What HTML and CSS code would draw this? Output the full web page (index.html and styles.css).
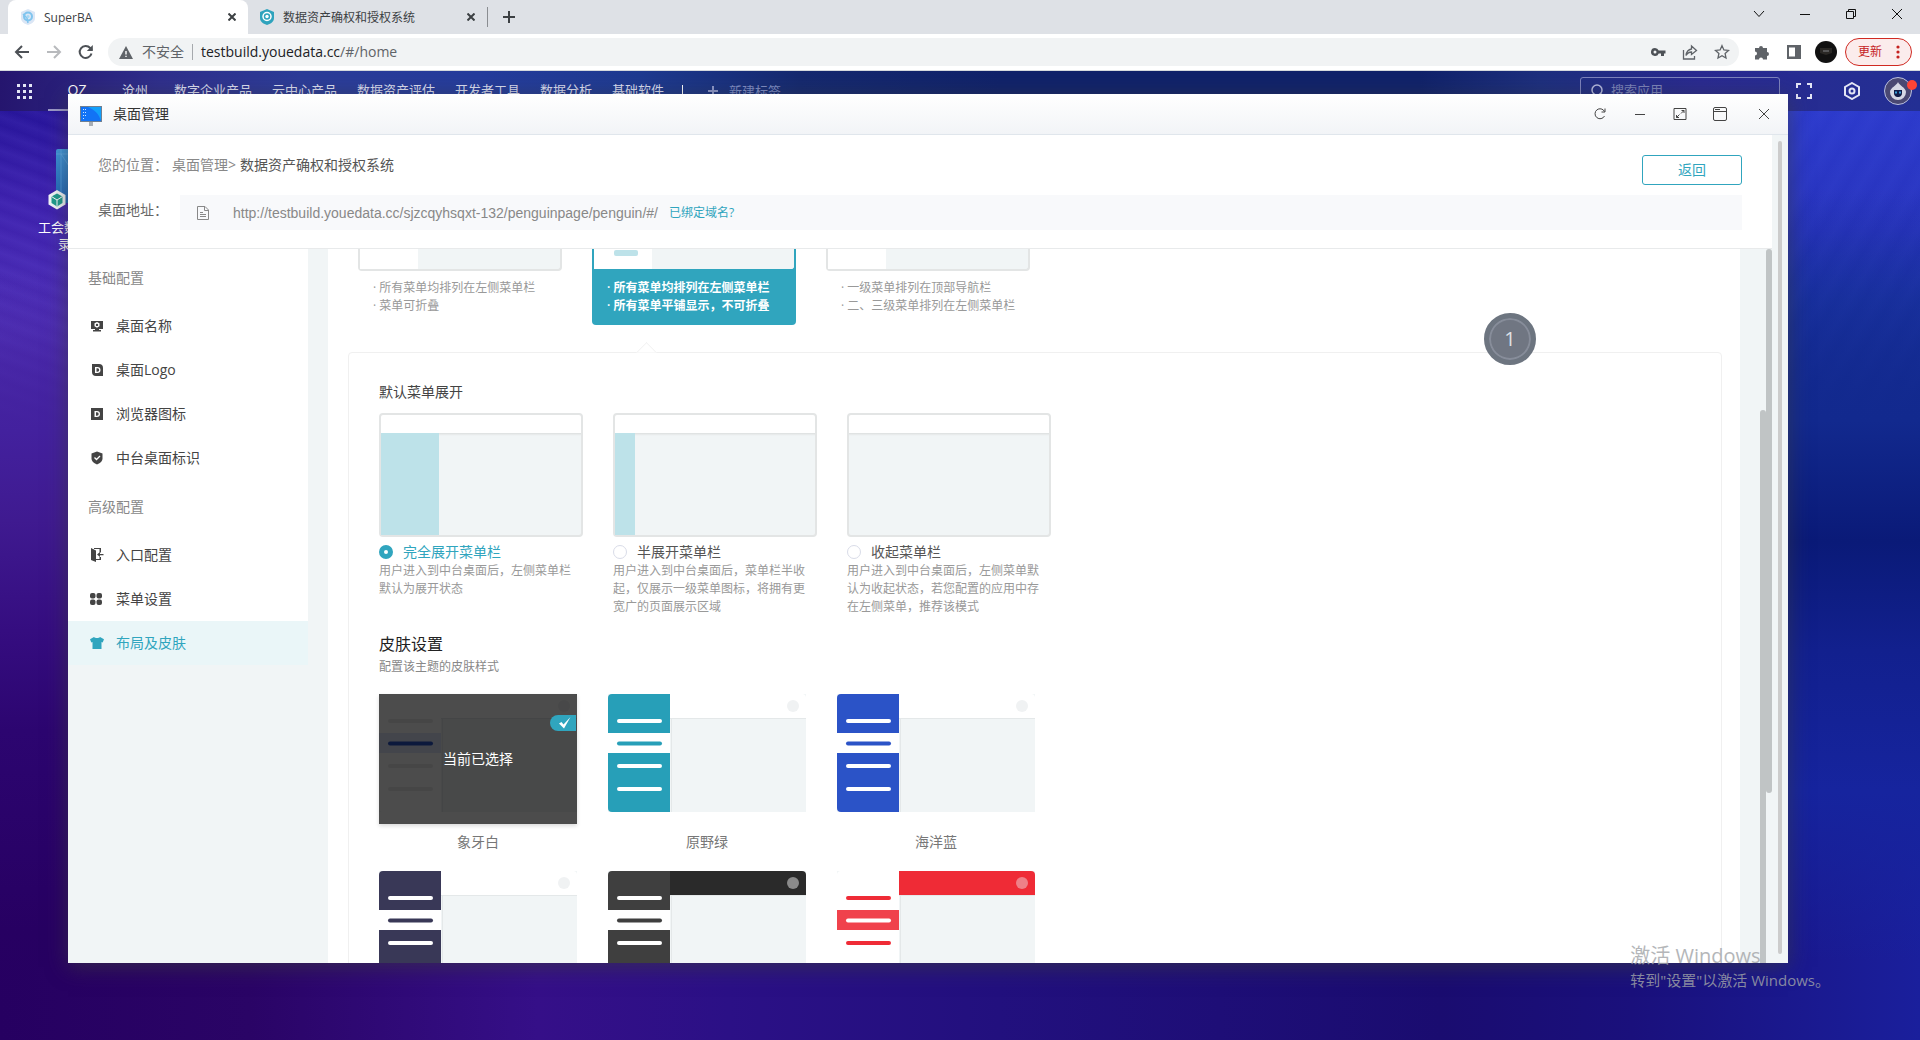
FILE: index.html
```html
<!DOCTYPE html>
<html lang="zh-CN">
<head>
<meta charset="utf-8">
<title>SuperBA</title>
<link rel="stylesheet" href="styles.css">
</head>
<body>
<svg class="defs" aria-hidden="true">
  <defs>
    <symbol id="skin-side" viewBox="0 0 198 118">
      <path class="page" d="M0 0h198v118H0z"/>
      <path class="top" d="M62 0h132a4 4 0 0 1 4 4v20H62z"/>
      <path class="edge" d="M62 24h136v1H62zM63 24h1v94h-1z"/>
      <path class="side" d="M4 0h58v118H4a4 4 0 0 1-4-4V4a4 4 0 0 1 4-4z"/>
      <path class="band" d="M0 39h62v20H0z"/>
      <g class="lines"><path d="M11 27h41M11 72h41M11 95h41"/></g>
      <path class="cur" d="M11 49.500h41"/>
      <circle class="dot" cx="185" cy="12" r="6"/>
    </symbol>
  </defs>
</svg>
<div class="browser">
  <header class="chrome">
    <div class="tabs">
      <div class="tab tab-active">
        <svg class="fav" viewBox="0 0 16 16"><path d="M1 3l7-3 7 3v6c0 4-4 6-7 7-3-1-7-3-7-7z" fill="#dbe6f5"/><circle cx="8" cy="7.500" r="4" fill="none" stroke="#7fc4ee" stroke-width="2"/><path d="M3 5l4 4 1 5" fill="none" stroke="#7fc4ee" stroke-width="1.500"/><circle cx="8" cy="7.500" r="1.500" fill="#a5d8f5"/></svg>
        <span class="tab-name">SuperBA</span>
        <svg class="x" viewBox="0 0 8 8"><path d="M0.500 0.500l7 7M7.500 0.500l-7 7"/></svg>
      </div>
      <div class="tab">
        <svg class="fav" viewBox="0 0 16 16"><path d="M1 3l7-3 7 3v6c0 4-4 6-7 7-3-1-7-3-7-7z" fill="#2fa3bd"/><circle cx="8" cy="7.500" r="4" fill="none" stroke="#fff" stroke-width="1.500"/><circle cx="8" cy="7.500" r="1.700" fill="#fff"/></svg>
        <span class="tab-name">数据资产确权和授权系统</span>
        <svg class="x" viewBox="0 0 8 8"><path d="M0.500 0.500l7 7M7.500 0.500l-7 7"/></svg>
      </div>
      <button class="newtab" aria-label="+"><svg viewBox="0 0 12 12"><path d="M6 0v12M0 6h12"/></svg></button>
      <div class="winctl">
        <svg viewBox="0 0 12 12"><path d="M1 3l5 5.500L11 3"/></svg>
        <svg viewBox="0 0 12 12"><path d="M1 6.500h10"/></svg>
        <svg viewBox="0 0 12 12"><path d="M1.500 3.500h7v7h-7zM3.500 3.500v-2h7v7h-2"/></svg>
        <svg viewBox="0 0 12 12"><path d="M1 1l10 10M11 1L1 11"/></svg>
      </div>
    </div>
    <div class="toolbar">
      <div class="navbtns">
        <svg viewBox="0 0 16 16"><path d="M15 8H2M8 2L2 8l6 6"/></svg>
        <svg class="off" viewBox="0 0 16 16"><path d="M1 8h13M8 2l6 6-6 6"/></svg>
        <svg viewBox="0 0 16 16"><path d="M13.500 9.500A6 6 0 1 1 12.200 4L14 6"/><path class="fill" d="M14.800 1v6h-6z"/></svg>
      </div>
      <div class="omnibox">
        <svg class="warn" viewBox="0 0 14 13"><path d="M7 0l7 13H0z"/><path d="M6.300 5h1.400v3.500H6.300zM6.300 9.700h1.400v1.400H6.300z" fill="#fff"/></svg>
        <span class="insecure">不安全</span>
        <span class="url"><b>testbuild.youedata.cc</b>/#/home</span>
        <svg class="oi" viewBox="0 0 16 16"><path class="fill" d="M5 4a4 4 0 1 0 3.700 5.500H11V12h3V9.500h1.500v-3H8.700A4 4 0 0 0 5 4zm0 2.500a1.500 1.500 0 1 1 0 3 1.500 1.500 0 0 1 0-3z"/></svg>
        <svg class="oi" viewBox="0 0 16 16"><path d="M1.500 6v9h11v-3M9.500 2l5 4.500-5 4V8C7 8 5.500 9 4 11.500c.5-4 2.500-6 5.500-6.500z"/></svg>
        <svg class="oi" viewBox="0 0 16 16"><path d="M8 1.700l1.900 4.200 4.600.5-3.400 3.100.9 4.500L8 11.700 4 14l.9-4.500L1.500 6.400l4.600-.5z"/></svg>
      </div>
      <svg class="ti" viewBox="0 0 16 16"><path d="M1 4h4a2 2 0 1 1 4 0h4v4a2 2 0 1 1 0 4v3.500H9a2 2 0 0 0-4 0H1V11.500a2 2 0 0 0 0-4z"/></svg>
      <svg class="ti" viewBox="0 0 16 16"><path fill-rule="evenodd" d="M1 1h14v14H1zM3 3.500v9h6v-9z"/></svg>
      <svg class="face" viewBox="0 0 22 22"><circle cx="11" cy="11" r="11" fill="#111"/><path d="M5 7h12v5l-6 2-6-2z" fill="#2a2825"/><path d="M8 9h6v2H8z" fill="#555"/></svg>
      <button class="update">更新<svg viewBox="0 0 4 14"><circle cx="2" cy="2" r="1.600"/><circle cx="2" cy="7" r="1.600"/><circle cx="2" cy="12" r="1.600"/></svg></button>
    </div>
  </header>

  <main class="desktop">
    <nav class="topnav">
      <svg class="grid" viewBox="0 0 15 15"><path d="M1.500 0v15M7.500 0v15M13.500 0v15"/></svg>
      <div class="links">
        <a href="#" class="on">QZ</a><a href="#">沧州</a><a href="#">数字企业产品</a><a href="#">云中心产品</a><a href="#">数据资产评估</a><a href="#">开发者工具</a><a href="#">数据分析</a><a href="#">基础软件</a>
      </div>
      <i class="sep"></i>
      <button class="addtag"><svg viewBox="0 0 10 10"><path d="M5 0v10M0 5h10"/></svg>新建标签</button>
      <div class="search">
        <svg viewBox="0 0 13 13"><circle cx="6" cy="6" r="5"/><path d="M9.500 9.500L13 13"/></svg>
        <input type="text" placeholder="搜索应用" aria-label="搜索应用">
      </div>
      <svg class="full" viewBox="0 0 16 16"><path d="M1 5V1h4M11 1h4v4M15 11v4h-4M5 15H1v-4"/></svg>
      <svg class="hex" viewBox="0 0 18 18"><path d="M9 1l7 4v8l-7 4-7-4V5z"/><circle cx="9" cy="9" r="2.500"/></svg>
      <div class="me">
        <svg viewBox="0 0 28 28"><circle cx="14" cy="14" r="13.500" fill="#4a4872" stroke="#b9bfe0"/><path d="M14 5c1 3 8 6 8 10a8 8 0 0 1-16 0c0-4 7-7 8-10z" fill="#d6d8e4"/><path d="M10 13h8v3a4 4 0 0 1-3 4h-2a4 4 0 0 1-3-4z" fill="#101c48"/><path d="M11 14.500h2v2h-2zM15 14.500h2v2h-2z" fill="#3aa0d8"/></svg>
        <i class="reddot"></i>
      </div>
    </nav>

    <div class="shortcut">
      <svg viewBox="0 0 64 64"><defs><linearGradient id="tile" x1="0" y1="0" x2="0" y2="1"><stop offset="0" stop-color="#3f97dc"/><stop offset="1" stop-color="#1c63b4"/></linearGradient></defs><rect x="8" y="2" width="54" height="54" rx="2" fill="url(#tile)"/><path d="M13 2v54M8 7h54M13 7l30 45" stroke="#6cb4ea" stroke-opacity=".5" fill="none"/><path d="M9 43l8.500 5v9.500L9 62.500.5 57.500V48z" fill="#f2f6f8"/><path d="M9 46.500l5.500 3v6.500L9 59.500 3.500 56v-6.500z" fill="#1f9c8c"/><path d="M3.500 49.500L9 53l5.500-3.500M9 53v6" stroke="#fff" fill="none"/></svg>
      <span class="l1">工会数</span><span class="l2">录</span>
    </div>

    <section class="window">
      <header class="wbar">
        <svg class="mon" viewBox="0 0 22 20"><path d="M0 0h22v16H0z" fill="#6f7f92"/><path d="M1 1h20v14H1z" fill="#1273f5"/><path d="M8 1h13v14c-2-7-6-11-13-14z" fill="#12a0fb"/><path d="M3 3h1v1H3zM5 3h1v1H5zM3 6h1v1H3zM5 6h1v1H5zM3 9h1v1H3zM5 9h1v1H5zM3 12h1v1H3z" fill="#cfe6ff"/><path d="M9 16h4v4H9z" fill="#a8aeb5"/></svg>
        <h1>桌面管理</h1>
        <div class="wctl">
          <svg viewBox="0 0 14 14"><path d="M11.500 9A5 5 0 1 1 11.500 4.500M12 1.500v3.500H8.500"/></svg>
          <svg viewBox="0 0 14 14"><path d="M2 7.500h10"/></svg>
          <svg viewBox="0 0 14 14"><path d="M1 1.500h12v11H1zM8.500 3.500h2.500v2.500M11 3.500L8 6.500M3.500 8v2.500H6M3.500 10.500l3-3"/></svg>
          <svg viewBox="0 0 14 14"><rect x=".5" y=".5" width="13" height="13" rx="1.500"/><path d="M.5 4.500h13M2 2.500h5"/></svg>
          <svg viewBox="0 0 14 14"><path d="M2 2l10 10M12 2L2 12"/></svg>
        </div>
      </header>
      <div class="wbody">
        <div class="frame">
          <div class="head">
            <div class="crumb"><span class="lbl">您的位置：</span><span class="up">桌面管理&gt;</span><span class="here">数据资产确权和授权系统</span><button class="back">返回</button></div>
            <div class="addr"><span class="lbl dark">桌面地址：</span>
              <div class="addrbox"><svg viewBox="0 0 12 14"><path d="M.5.500h7.500l3.500 3.500v9.500H.5zM7.500.500v4h4M3 6.500h3M3 8.500h6M3 10.500h6"/></svg><span>http://testbuild.youedata.cc/sjzcqyhsqxt-132/penguinpage/penguin/#/</span><a href="#">已绑定域名?</a></div>
            </div>
          </div>
          <div class="cols">
            <nav class="menu">
              <h2>基础配置</h2>
              <a href="#"><svg viewBox="0 0 14 14"><path fill-rule="evenodd" d="M1 2h12v8H9v1h2v1.500H3V11h2v-1H1zM7 3L4.500 4.200v3.100L7 8.800l2.500-1.500V4.200zm0 1.700a1.200 1.200 0 1 1 0 2.400 1.200 1.200 0 0 1 0-2.400z"/></svg>桌面名称</a>
              <a href="#"><svg viewBox="0 0 14 14"><path fill-rule="evenodd" d="M2 1h7a4 4 0 0 1 4 4v8H6a4 4 0 0 1-4-4zM5 4v6h2.500a3 3 0 0 0 0-6zm1.500 1.300h1a1.700 1.700 0 0 1 0 3.400h-1z"/></svg>桌面Logo</a>
              <a href="#"><svg viewBox="0 0 14 14"><path fill-rule="evenodd" d="M1 1h12v12H1zM4.500 4v6H7a3 3 0 0 0 0-6zM6 5.300h1a1.700 1.700 0 0 1 0 3.400H6z"/></svg>浏览器图标</a>
              <a href="#"><svg viewBox="0 0 14 14"><path d="M7 .5l5.500 2v5c0 3-3 5-5.500 6-2.500-1-5.500-3-5.500-6v-5z"/><path d="M4.500 6.500L6.500 8.500l3.500-3.500" stroke="#fff" stroke-width="1.300" fill="none"/></svg>中台桌面标识</a>
              <h2>高级配置</h2>
              <a href="#"><svg viewBox="0 0 14 14"><path d="M1 0l5 2.500v11.500l-5-2zM4 0h7v4.500H9.500V1H4zM9.500 9H11v3H6v-1h3.500zM7 6.500L10 4v2h3.500v1.200H10V9z"/></svg>入口配置</a>
              <a href="#"><svg viewBox="0 0 14 14"><rect x="0" y="1" width="5.500" height="5.500" rx="2"/><rect x="6.500" y="1" width="5.500" height="5.500" rx="2"/><rect x="0" y="7.500" width="5.500" height="5.500" rx="2"/><rect x="6.500" y="7.500" width="5.500" height="5.500" rx="2"/></svg>菜单设置</a>
              <a href="#" class="sel"><svg viewBox="0 0 14 14"><path d="M4 1c1 1.300 5 1.300 6 0l4 2.200-1.300 3.300-1.200-.5v7h-9V6l-1.200.5L0 3.200z"/></svg>布局及皮肤</a>
            </nav>
            <div class="panel">
              <div class="layouts">
                <div class="layout"><div class="thumb"><i></i></div><p>· 所有菜单均排列在左侧菜单栏<br>· 菜单可折叠</p></div>
                <div class="layout chosen"><div class="thumb"><i><b></b></i></div><p>· 所有菜单均排列在左侧菜单栏<br>· 所有菜单平铺显示，不可折叠</p></div>
                <div class="layout"><div class="thumb"><i></i></div><p>· 一级菜单排列在顶部导航栏<br>· 二、三级菜单排列在左侧菜单栏</p></div>
              </div>
              <div class="box">
                <h3>默认菜单展开</h3>
                <div class="modes">
                  <div class="mode"><div class="pic"><i class="wide"></i></div><label><input type="radio" name="m" checked>完全展开菜单栏</label><p>用户进入到中台桌面后，左侧菜单栏默认为展开状态</p></div>
                  <div class="mode"><div class="pic"><i class="slim"></i></div><label><input type="radio" name="m">半展开菜单栏</label><p>用户进入到中台桌面后，菜单栏半收起，仅展示一级菜单图标，将拥有更宽广的页面展示区域</p></div>
                  <div class="mode"><div class="pic"></div><label><input type="radio" name="m">收起菜单栏</label><p>用户进入到中台桌面后，左侧菜单默认为收起状态，若您配置的应用中存在左侧菜单，推荐该模式</p></div>
                </div>
                <h4>皮肤设置</h4>
                <p class="sub">配置该主题的皮肤样式</p>
                <div class="skins">
                  <figure class="ivory"><svg><use href="#skin-side"/></svg><div class="mask">当前已选择<span class="tick"><svg viewBox="0 0 12 12"><path d="M0 6.500L2.500 5l2 2.500L11.500 0 5 11.500z"/></svg></span></div><figcaption>象牙白</figcaption></figure>
                  <figure class="green"><svg><use href="#skin-side"/></svg><figcaption>原野绿</figcaption></figure>
                  <figure class="blue"><svg><use href="#skin-side"/></svg><figcaption>海洋蓝</figcaption></figure>
                  <figure class="purple"><svg><use href="#skin-side"/></svg></figure>
                  <figure class="black"><svg><use href="#skin-side"/></svg></figure>
                  <figure class="red"><svg><use href="#skin-side"/></svg></figure>
                </div>
              </div>
            </div>
            <div class="rail"><i class="inner"></i><i class="outer"></i></div>
          </div>
        </div>
        <div class="wscroll"><i></i></div>
      </div>
      <div class="bubble">1</div>
    </section>
    <div class="mark"><p>激活 Windows</p><p>转到"设置"以激活 Windows。</p></div>
  </main>
</div>
</body>
</html>
```
FILE: styles.css
```css
* { box-sizing: border-box; }
body, h1, h2, h3, h4, p, figure { margin: 0; font-weight: 400; }
body { font: 14px/20px "Open Sans", "Noto Sans CJK SC", sans-serif; color: #333; overflow: hidden; }
a { text-decoration: none; color: inherit; }
button { font: inherit; color: inherit; background: none; border: 0; padding: 0; }
svg { display: block; flex: none; }
i { display: block; }
.defs { position: absolute; width: 0; height: 0; }
.browser { height: 100vh; display: flex; flex-direction: column; }

/* browser chrome */
.chrome { flex: none; border-bottom: 1px solid #d5d9dd; background: #fff; color: #3c4043; }
.tabs { display: flex; height: 34px; background: #dee1e6; padding-left: 8px; }
.tab { width: 240px; display: flex; align-items: center; gap: 8px; padding: 0 12px 0 11px; font-size: 12px; }
.tab-active { background: #fff; border-radius: 8px 8px 0 0; padding: 0 11px 0 12px; }
.fav { width: 16px; height: 16px; }
.tab-name { flex: 1; white-space: nowrap; padding-top: 2px; }
.x { width: 8px; height: 8px; stroke: #3c4043; stroke-width: 2; fill: none; margin-right: 1px; }
.newtab { border-left: 1px solid #8a8d91; height: 20px; margin: 7px 0 7px -1px; padding-left: 15px; }
.newtab svg { width: 12px; height: 12px; stroke: #3c4043; stroke-width: 2; }
.winctl { margin-left: auto; display: flex; gap: 34px; padding: 8px 17px 0 0; }
.winctl svg { width: 12px; height: 12px; fill: none; stroke: #111; }
.toolbar { height: 36px; display: flex; align-items: center; gap: 16px; padding: 0 8px 0 14px; }
.navbtns { display: flex; gap: 16px; margin-right: -2px; }
.navbtns svg { width: 16px; height: 16px; fill: none; stroke: #4d5156; stroke-width: 2; }
.navbtns .off { stroke: #b8babd; }
.fill, .navbtns .fill { fill: #4d5156; stroke: none; }
.omnibox { flex: 1; height: 28px; border-radius: 14px; background: #f1f3f4; display: flex; align-items: center; padding: 0 9px 0 11px; color: #5f6368; margin-right: -1px; }
.warn { width: 14px; height: 13px; fill: #5f6368; margin-right: 9px; }
.insecure { padding-right: 8px; border-right: 1px solid #a6a9ad; line-height: 16px; margin-right: 8px; }
.url { flex: 1; }
.url b { font-weight: 400; color: #202124; }
.oi { width: 16px; height: 16px; fill: none; stroke: #5f6368; margin-left: 16px; stroke-width: 1.3; }
.ti { width: 16px; height: 16px; fill: #5f6368; }
.face { width: 22px; height: 22px; margin: 0 -8px 0 -3px; }
.update { width: 67px; height: 28px; border: 1px solid #d02a22; border-radius: 14px; background: #fbecec; color: #c5221f; font-size: 12px; display: flex; align-items: center; justify-content: space-between; padding: 0 11px 0 12px; }
.update svg { width: 4px; height: 14px; fill: #c5221f; }

/* desktop */
.desktop { flex: 1; min-height: 0; position: relative; overflow: hidden; padding: 23px 132px 77px 68px;
  background:
    linear-gradient(90deg, #260061 0, #2a0466 13%, #350f88 28%, #2b1086 38%, #22107e 52%, #1a0c70 75%, #1a107c 85%, #1a1f9c 100%); }
.desktop::before, .desktop::after { content: ""; position: absolute; top: 0; bottom: 0; }
.desktop::before { left: 0; width: 68px;
  background:
    linear-gradient(180deg, transparent 200px, #43219e 360px, #3f1a90 450px, #350d80 560px, #2c0570 660px, #270062 860px, transparent 940px),
    repeating-linear-gradient(20deg, rgba(140,120,255,.08) 0, transparent 8px, rgba(140,120,255,.08) 16px) 0 0 / 100% 420px no-repeat,
    linear-gradient(180deg, #27159a 40px, #3c20ac 130px, #4e2fb6 260px, #43219e 420px, transparent 420px); }
.desktop::after { right: 0; width: 132px;
  background:
    linear-gradient(180deg, transparent 120px, #12298e 350px, #0a1a78 470px, #12208e 580px, #16249e 720px, transparent 890px),
    repeating-linear-gradient(120deg, rgba(100,120,255,.05) 0, transparent 12px, rgba(100,120,255,.05) 24px) 0 0 / 100% 400px no-repeat,
    linear-gradient(180deg, #2c3acc 40px, #2733bc 160px, #1c34a8 230px, #12298e 350px, #12298e 400px, transparent 400px); }
.topnav { position: absolute; z-index: 1; left: 0; right: 0; top: 0; height: 40px; padding: 0 8px 0 17px; display: flex; align-items: center; color: #dcdff2; font-size: 13px;
  background: linear-gradient(90deg, #25156e 0, #2f2f8c 160px, #2c3c98 300px, #253c9c 480px, #1e3a90 640px, #15296f 800px, #10226a 1000px, #10226a 1420px, #1d2f7e 1540px, #2a2a90 1700px, #232f94 100%); }
.grid { width: 15px; height: 15px; stroke: #e3e5f5; stroke-width: 3; stroke-dasharray: 3 3; margin-right: 16px; }
.links { display: flex; height: 100%; }
.links a { min-width: 58px; padding: 0 10px; text-align: center; line-height: 38px; }
.links .on { color: #fff; border-bottom: 2px solid #9d9ac8; font-size: 14px; }
.sep { width: 1px; height: 12px; background: #fff; margin: 0 25px 0 8px; }
.addtag { display: flex; align-items: center; gap: 11px; color: #7f8cc4; }
.addtag svg { width: 10px; height: 10px; stroke: #8e99cc; stroke-width: 2; }
.search { margin-left: auto; width: 200px; height: 28px; border: 1px solid #7d83bd; border-radius: 3px; display: flex; align-items: center; gap: 7px; padding: 0 0 2px 10px; }
.search svg { width: 13px; height: 13px; fill: none; stroke: #b6bbe0; stroke-width: 1.5; }
.search input { flex: 1; min-width: 0; background: none; border: 0; padding: 0; font: inherit; color: #fff; }
.search input::placeholder { color: #7c83ba; opacity: 1; }
.full { width: 16px; height: 16px; fill: none; stroke: #e3e5f5; stroke-width: 2; margin: 0 31px 0 16px; }
.hex { width: 18px; height: 18px; fill: none; stroke: #e3e5f5; stroke-width: 2; margin-right: 23px; }
.me { position: relative; }
.me svg { width: 28px; height: 28px; }
.reddot { position: absolute; right: -5px; top: 3px; width: 10px; height: 10px; border-radius: 50%; background: #ff4436; }
.shortcut { position: absolute; z-index: 1; left: 38px; top: 76px; color: #fff; font-size: 13px; line-height: 17px; display: flex; flex-direction: column; }
.shortcut svg { width: 64px; height: 64px; margin: 0 0 8px 10px; }
.l2 { padding-left: 20px; }

/* window */
.window { position: relative; z-index: 2; height: 100%; display: flex; flex-direction: column; background: #fff; box-shadow: 0 4px 20px rgba(60,60,60,.6); }
.wbar { flex: none; height: 41px; display: flex; align-items: center; padding: 0 17px 0 12px; background: linear-gradient(#fff, #f2f4f7); border-bottom: 1px solid #e0e6ec; }
.mon { width: 22px; height: 20px; margin: 3px 11px 0 0; }
h1 { font-size: 14px; color: #333; }
.wctl { margin-left: auto; display: flex; gap: 26px; }
.wctl svg { width: 14px; height: 14px; fill: none; stroke: #444; }
.wctl svg:last-child { margin-left: 4px; }
.wbody { flex: 1; min-height: 0; display: flex; }
.frame { flex: 1; min-width: 0; display: flex; flex-direction: column; }
.wscroll { width: 16px; background: #f1f5f6; padding: 6px 6px 9px; }
.wscroll i { height: 100%; border-radius: 2px; background: #ccc; }
.head { flex: none; height: 114px; padding: 20px 30px 0; border-bottom: 1px solid #e8eaeb; }
.crumb { display: flex; align-items: center; height: 30px; line-height: 30px; }
.lbl { width: 74px; color: #888; line-height: 20px; }
.crumb .lbl, .crumb .up, .crumb .here { padding-bottom: 10px; line-height: 20px; }
.dark { width: 82px; color: #666; padding-bottom: 5px; }
.up { color: #888; margin-right: 4px; }
.here { color: #555; }
.back { margin-left: auto; width: 100px; height: 30px; border: 1px solid #30a5be; border-radius: 3px; color: #30a5be; line-height: 26px; }
.addr { display: flex; align-items: center; margin-top: 10px; }
.addrbox { flex: 1; height: 35px; background: #f8f9fb; display: flex; align-items: center; padding-left: 17px; color: #888; font-family: "Liberation Sans", sans-serif; }
.addrbox svg { width: 12px; height: 14px; fill: none; stroke: #888; margin-right: 24px; }
.addrbox a { font: 12px/20px "Open Sans", "Noto Sans CJK SC", sans-serif; color: #30a5be; margin-left: 11px; padding-top: 1px; }
.cols { flex: 1; min-height: 0; display: flex; background: #f1f5f6; }
.menu { width: 240px; flex: none; align-self: flex-start; background: #fff; padding-top: 2px; margin-right: 20px; color: #444; }
h2 { font-size: 14px; color: #888; padding: 17px 20px 16px; }
.menu a { height: 44px; display: flex; align-items: center; gap: 12px; padding: 0 0 1px 22px; }
.menu svg { width: 14px; height: 14px; fill: #444; }
.menu .sel { background: #eaf6f8; color: #30a5be; }
.menu .sel svg { fill: #30a5be; }
.panel { flex: 1; min-width: 0; overflow: hidden; background: #fff; padding: 0 18px 0 20px; }
.layouts { display: flex; gap: 30px; padding-left: 10px; height: 103px; }
.layout { width: 204px; height: 76px; font-size: 12px; line-height: 18px; color: #999; }
.thumb { height: 22px; border: 2px solid #e3e5e5; border-top: 0; border-radius: 0 0 4px 4px; background: #f1f5f6; }
.thumb i { width: 58px; height: 20px; background: #fff; }
.layout p { padding: 8px 0 0 15px; white-space: nowrap; }
.chosen { background: #30a5be; color: #fff; border-radius: 0 0 4px 4px; }
.chosen p { font-weight: 600; }
.chosen .thumb { border-color: #30a5be; }
.chosen i { padding: 1px 0 0 20px; }
.chosen b { display: block; width: 24px; height: 6px; background: #bde2e9; border-radius: 2px; }
.box { position: relative; border: 1px solid #f0f0f0; border-radius: 4px; padding: 29px 30px; height: 800px; }
.box::before { content: ""; position: absolute; left: 290px; top: -8px; width: 14px; height: 14px; background: #fff; border: solid #f0f0f0; border-width: 1px 0 0 1px; transform: rotate(45deg); clip-path: polygon(0 0, 100% 0, 0 100%); }
h3 { font-size: 14px; color: #444; margin-bottom: 11px; }
.modes { display: flex; gap: 30px; height: 207px; }
.mode { width: 204px; }
.pic { height: 124px; border: 2px solid #e3e5e5; border-radius: 4px; background: linear-gradient(#fff 18px, #dcdfdf 18px, #eceff0 20px, #f1f5f6 21px); padding-top: 18px; margin-bottom: 5px; }
.pic i { height: 102px; background: #bde2e9; }
.wide { width: 58px; }
.slim { width: 20px; }
.mode label { display: flex; align-items: center; gap: 10px; color: #555; }
.mode input { appearance: none; margin: 0; width: 14px; height: 14px; border: 1px solid #d9dce8; border-radius: 50%; background: #fff; }
.mode input:checked { border: 5px solid #30a5be; }
.mode:first-child label { color: #30a5be; }
.mode p { width: 192px; font-size: 12px; line-height: 18px; color: #999; }
h4 { font-size: 16px; line-height: 24px; color: #222; margin-top: 12px; }
.sub { font-size: 12px; color: #888; margin: 1px 0 17px; }
.skins { display: grid; grid-template-columns: repeat(3, 198px); gap: 0 31px; }
figure { position: relative; height: 177px; }
figure > svg { width: 198px; height: 118px; }
figcaption { text-align: center; color: #777; padding-top: 20px; }
.page { fill: #f1f5f6; }
.edge { fill: #000; opacity: .05; }
.top { fill: var(--top, #fff); }
.side { fill: var(--side); }
.band { fill: var(--band, #fff); }
.lines { stroke: var(--line, #fff); stroke-width: 4; stroke-linecap: round; }
.cur { stroke: var(--cur, var(--side)); stroke-width: 4; stroke-linecap: round; }
.dot { fill: var(--dot, #f0f2f3); }
.ivory { --side: #fff; --band: #e2e8fa; --line: #eaeaea; --cur: #2a56c8; }
.green { --side: #279fb8; }
.blue { --side: #2b53c7; }
.purple { --side: #393857; }
.black { --side: #3f3f3f; --top: #2a2a2a; --dot: #8a8a8a; }
.red { --side: #fff; --top: #ef2b36; --band: #f0424c; --line: #ef2b36; --cur: #fff; --dot: #ee8088; }
.mask { position: absolute; left: 0; top: 0; width: 198px; height: 130px; background: rgba(0,0,0,.7); color: #fff; line-height: 130px; text-align: center; box-shadow: 0 2px 4px rgba(0,0,0,.15); }
.tick { position: absolute; right: 1px; top: 21px; width: 26px; height: 16px; border-radius: 8px 0 0 8px; background: #30a5be; padding: 2px 0 0 9px; }
.tick svg { width: 12px; height: 12px; fill: #fff; }
.rail { width: 32px; padding-left: 20px; display: flex; }
.rail i { width: 6px; border-radius: 3px; background: #c0c4c5; }
.inner { margin-top: 161px; }
.rail .inner { border-radius: 3px 3px 0 0; }
.outer { height: 544px; }
.bubble { position: absolute; right: 252px; top: 219px; width: 52px; height: 52px; border-radius: 50%; border: 5px solid #6d7580; background: #707682; color: #dfe1e5; font-size: 20px; line-height: 38px; text-align: center; box-shadow: inset 0 0 0 2px #878d9a; padding-top: 2px; }
.mark { position: absolute; z-index: 3; right: 90px; bottom: 50px; color: #a2a5a8; opacity: .8; font-size: 15px; line-height: 20px; white-space: nowrap; }
.mark p:first-child { font-size: 20px; line-height: 28px; }
```
